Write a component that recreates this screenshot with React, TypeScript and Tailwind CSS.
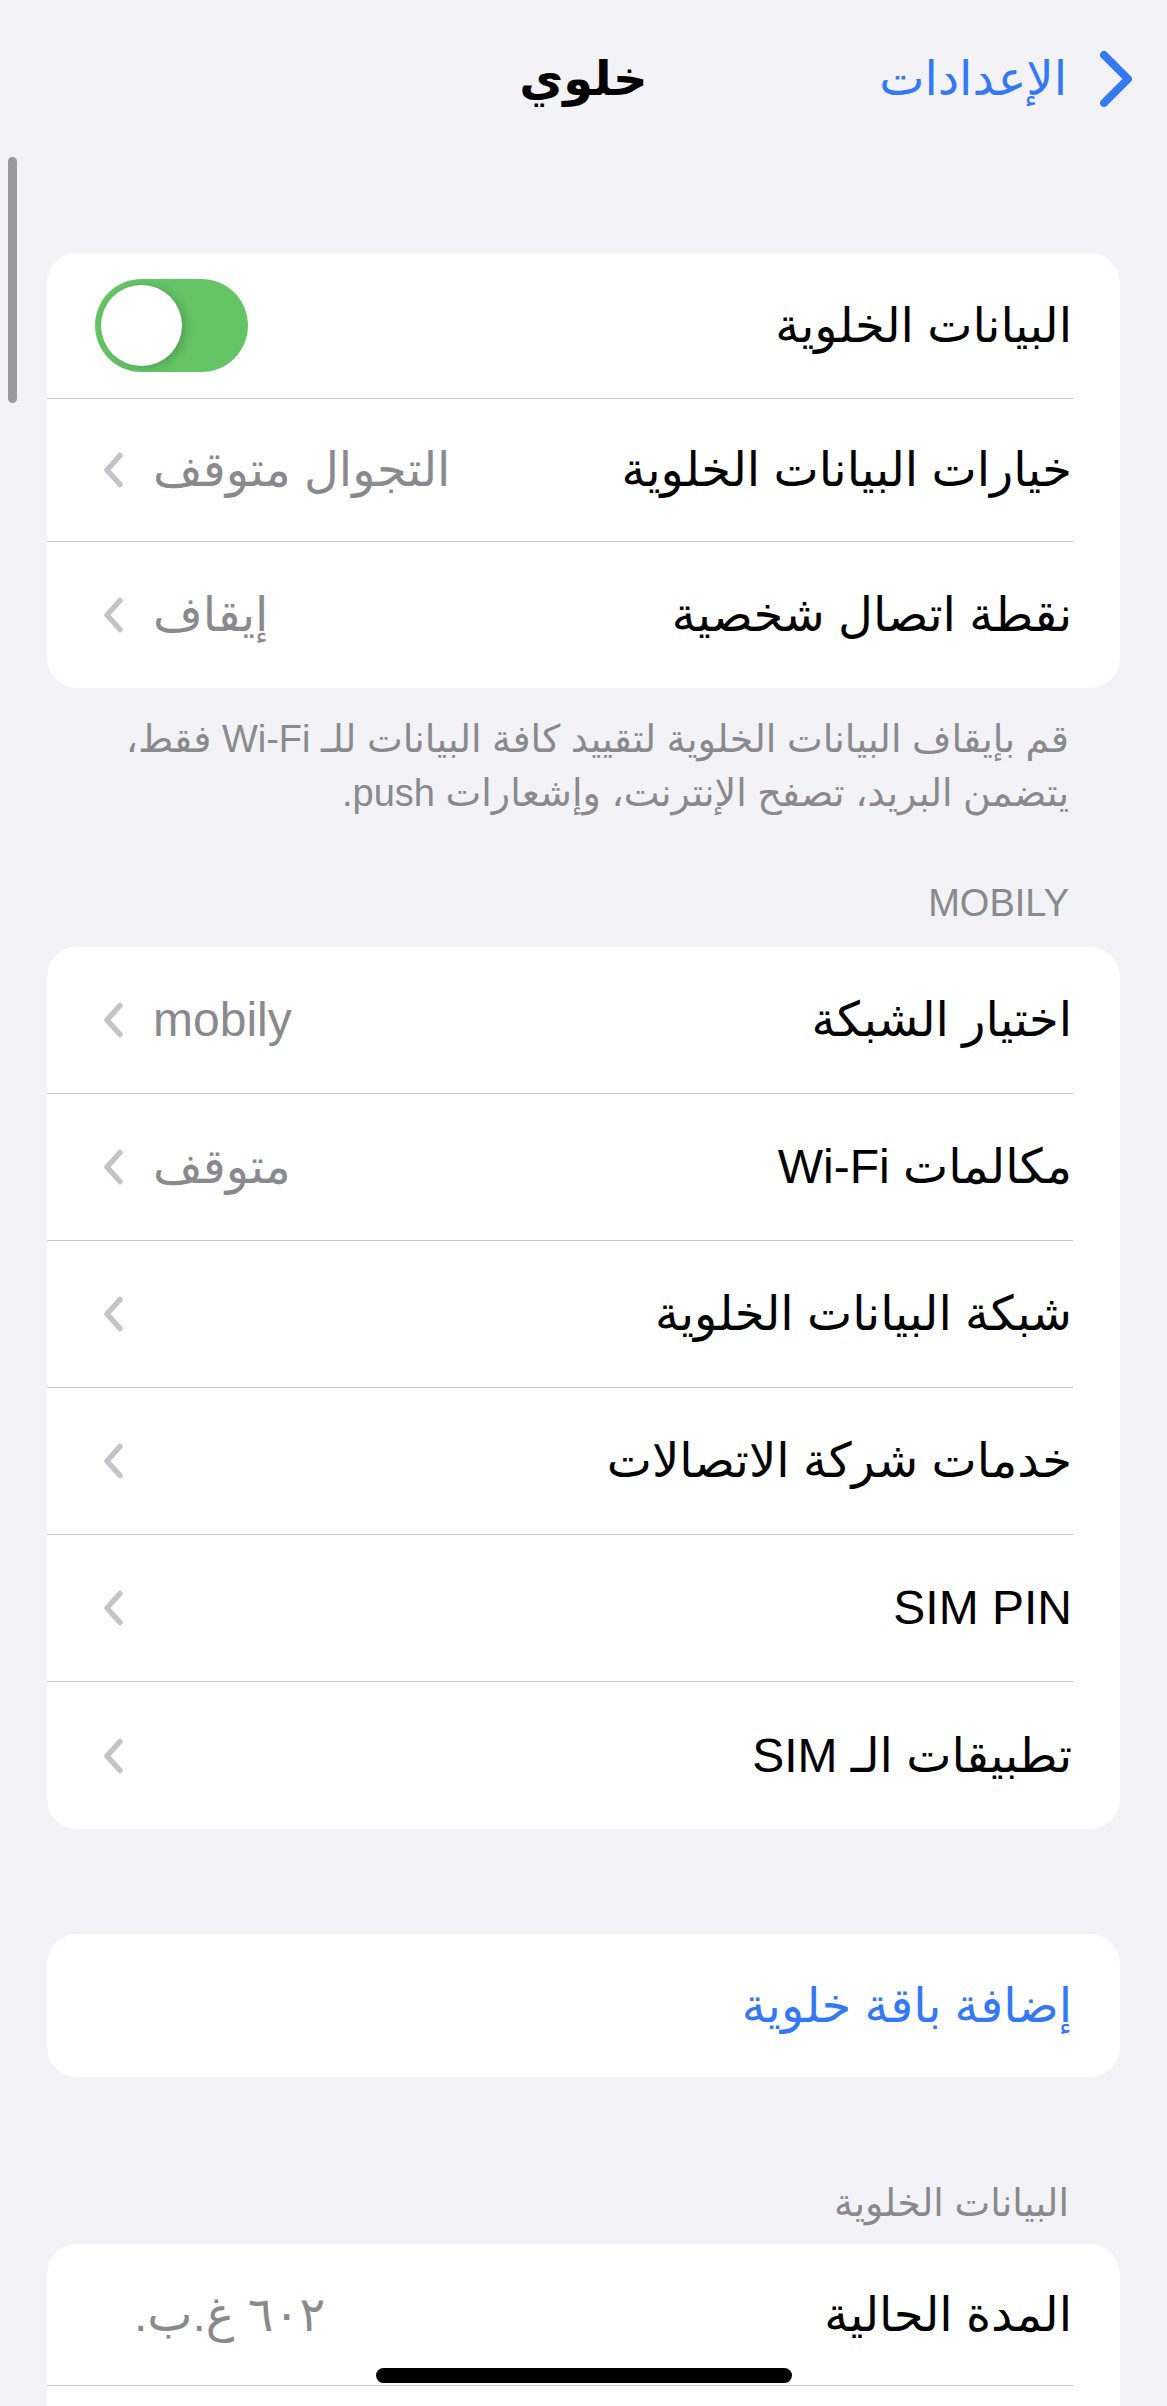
import type { ReactNode } from "react";

const FONT = "[font-family:'Liberation_Sans','DejaVu_Sans',sans-serif]";

function Chevron() {
  return (
    <svg width="21" height="36" viewBox="0 0 21 36" className="shrink-0">
      <path
        d="M17 3.5 L4 18 L17 32.5"
        fill="none"
        stroke="#c4c4c7"
        strokeWidth="5.5"
        strokeLinecap="round"
        strokeLinejoin="round"
      />
    </svg>
  );
}

function Toggle() {
  return (
    <div className="flex h-[93px] w-[153px] shrink-0 items-center justify-end rounded-full bg-[#65c466] p-[6px]">
      <div className="h-[81px] w-[81px] rounded-full bg-white shadow-[4px_2px_10px_rgba(0,0,0,0.18)]" />
    </div>
  );
}

type RowProps = {
  label?: string;
  value?: string;
  chevron?: boolean;
  trailing?: ReactNode;
  last?: boolean;
  h?: string;
  left?: string;
};

function Row({ label, value, chevron, trailing, last, h = "h-[147px]", left = "pl-[56px]" }: RowProps) {
  return (
    <div className={`mr-[47px] flex items-center justify-between ${h} ${left} pr-[1px] ${last ? "" : "border-b border-[#c6c6c8]"}`}>
      <span className="text-[48px] whitespace-nowrap text-black">{label}</span>
      <div className="flex items-center gap-[29px]">
        {value && <span className="text-[48px] whitespace-nowrap text-[#8a8a8e]">{value}</span>}
        {chevron && <Chevron />}
        {trailing}
      </div>
    </div>
  );
}

function Card({ children, className = "" }: { children: ReactNode; className?: string }) {
  return <div className={`mx-[47px] overflow-hidden rounded-[30px] bg-white ${className}`}>{children}</div>;
}

export default function App() {
  return (
    <div dir="rtl" className={`relative h-[2406px] w-full overflow-hidden bg-[#f2f2f7] ${FONT}`}>
      {/* nav */}
      <div className="grid h-[158px] grid-cols-3 items-center">
        <div className="flex items-center gap-[32px] pr-[34px]">
          <svg width="34" height="58" viewBox="0 0 34 58" className="shrink-0">
            <path
              d="M5 5 L29 29 L5 53"
              fill="none"
              stroke="#3478f6"
              strokeWidth="8"
              strokeLinecap="round"
              strokeLinejoin="round"
            />
          </svg>
          <span className="text-[48px] whitespace-nowrap text-[#3478f6]">الإعدادات</span>
        </div>
        <div className="text-center text-[48px] font-bold text-black">خلوي</div>
        <div />
      </div>

      <div className="flex flex-col pt-[95px]">
        <Card>
          <Row label="البيانات الخلوية" trailing={<Toggle />} h="h-[146px]" left="pl-[48px]" />
          <Row label="خيارات البيانات الخلوية" value="التجوال متوقف" chevron h="h-[143px]" />
          <Row label="نقطة اتصال شخصية" value="إيقاف" chevron h="h-[146px]" last />
        </Card>

        <div className="px-[98px] pt-[24px] text-[38px] leading-[54px] text-[#8a8a8e]">
          <div className="whitespace-nowrap">قم بإيقاف البيانات الخلوية لتقييد كافة البيانات للـ Wi-Fi فقط،</div>
          <div className="whitespace-nowrap">يتضمن البريد، تصفح الإنترنت، وإشعارات push.</div>
        </div>

        <div className="px-[98px] pt-[60px] pb-[21px] text-[38px] leading-[46px] uppercase text-[#8a8a8e]">
          Mobily
        </div>

        <Card>
          <Row label="اختيار الشبكة" value="mobily" chevron />
          <Row label="مكالمات Wi-Fi" value="متوقف" chevron />
          <Row label="شبكة البيانات الخلوية" chevron />
          <Row label="خدمات شركة الاتصالات" chevron />
          <Row label="SIM PIN" chevron />
          <Row label="تطبيقات الـ SIM" chevron last />
        </Card>

        <Card className="mt-[105px]">
          <div className="flex h-[143px] items-center pr-[48px]">
            <span className="text-[48px] text-[#3478f6]">إضافة باقة خلوية</span>
          </div>
        </Card>

        <div className="px-[98px] pt-[103px] pb-[18px] text-[38px] leading-[46px] text-[#8a8a8e]">
          البيانات الخلوية
        </div>

        <Card>
          <Row label="المدة الحالية" value="٦٠٢ غ.ب." h="h-[142px]" left="pl-[87px]" />
          <Row h="h-[142px]" last />
        </Card>
      </div>

      {/* scroll indicator */}
      <div className="absolute left-[8px] top-[157px] h-[246px] w-[9px] rounded-full bg-[#9a9a9e]" />
      {/* home indicator */}
      <div className="absolute bottom-[23px] left-[376px] h-[15px] w-[416px] rounded-full bg-black" />
    </div>
  );
}
